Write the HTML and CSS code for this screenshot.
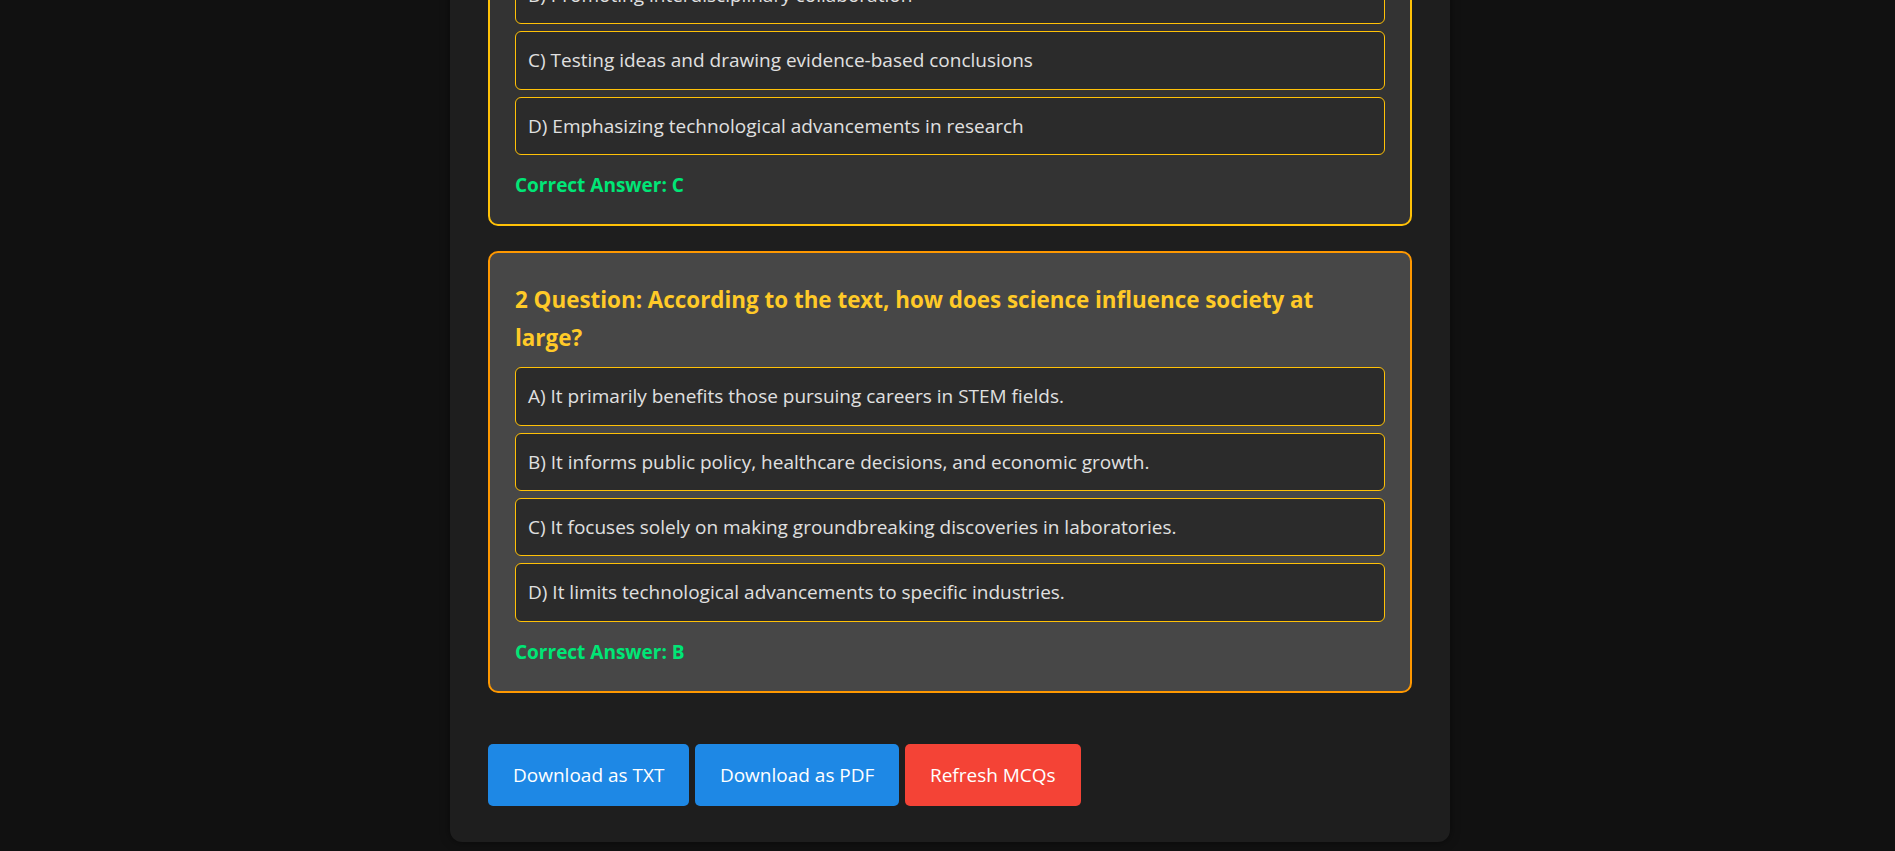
FILE: index.html
```html
<!DOCTYPE html>
<html lang="en">
<head>
<meta charset="utf-8">
<title>MCQ Generator</title>
<link rel="stylesheet" href="styles.css">
</head>
<body>
<div class="container">
  <div class="mcq-card">
    <div class="option">B) Promoting interdisciplinary collaboration</div>
    <div class="option">C) Testing ideas and drawing evidence-based conclusions</div>
    <div class="option">D) Emphasizing technological advancements in research</div>
    <p class="answer">Correct Answer: C</p>
  </div>
  <div class="mcq-card active">
    <h3 class="question">2 Question: According to the text, how does science influence society at large?</h3>
    <div class="option">A) It primarily benefits those pursuing careers in STEM fields.</div>
    <div class="option">B) It informs public policy, healthcare decisions, and economic growth.</div>
    <div class="option">C) It focuses solely on making groundbreaking discoveries in laboratories.</div>
    <div class="option">D) It limits technological advancements to specific industries.</div>
    <p class="answer">Correct Answer: B</p>
  </div>
  <div class="actions">
    <button class="btn btn-blue">Download as TXT</button>
    <button class="btn btn-blue">Download as PDF</button>
    <button class="btn btn-red">Refresh MCQs</button>
  </div>
</div>
</body>
</html>
```
FILE: styles.css
```css
html {
  background: #111111;
}
body {
  margin: 0;
  padding-left: 5px;
  background: #111111;
  font-family: "Open Sans", "Noto Sans", sans-serif;
  color: #e0e0e0;
}
.container {
  width: 1000px;
  box-sizing: border-box;
  margin: -99px auto 8px;
  padding: 38px 38px 36px;
  background: #1e1e1e;
  border-radius: 12px;
  box-shadow: 0 0 10px rgba(0, 0, 0, 0.5);
}
.mcq-card {
  background: #333333;
  border: 2px solid #ffc107;
  border-radius: 10px;
  padding: 25px;
  margin-bottom: 25px;
}
.mcq-card.active {
  background: #474747;
  border-color: #ff9800;
}
.question {
  margin: 0 0 10px;
  padding-top: 3px;
  font-size: 22.4px;
  line-height: 38px;
  font-weight: 700;
  color: #ffca28;
}
.option {
  background: #2b2b2b;
  border: 1px solid #ffc107;
  border-radius: 6px;
  padding: 12px;
  margin: 7px 0;
  font-size: 19px;
  line-height: 32.4px;
  color: #e0e0e0;
}
.option:first-child {
  margin-top: 0;
}
.answer {
  margin: 16px 0 0;
  font-size: 19px;
  line-height: 28px;
  font-weight: 700;
  color: #00e676;
}
.actions {
  display: flex;
  gap: 5.5px;
  margin-top: 51px;
}
.btn {
  border: none;
  border-radius: 5px;
  padding: 18px 25px;
  font-family: inherit;
  font-size: 19px;
  line-height: 26px;
  color: #ffffff;
  cursor: pointer;
}
.btn-blue {
  background: #1e88e5;
}
.btn-red {
  background: #f44336;
}
```
